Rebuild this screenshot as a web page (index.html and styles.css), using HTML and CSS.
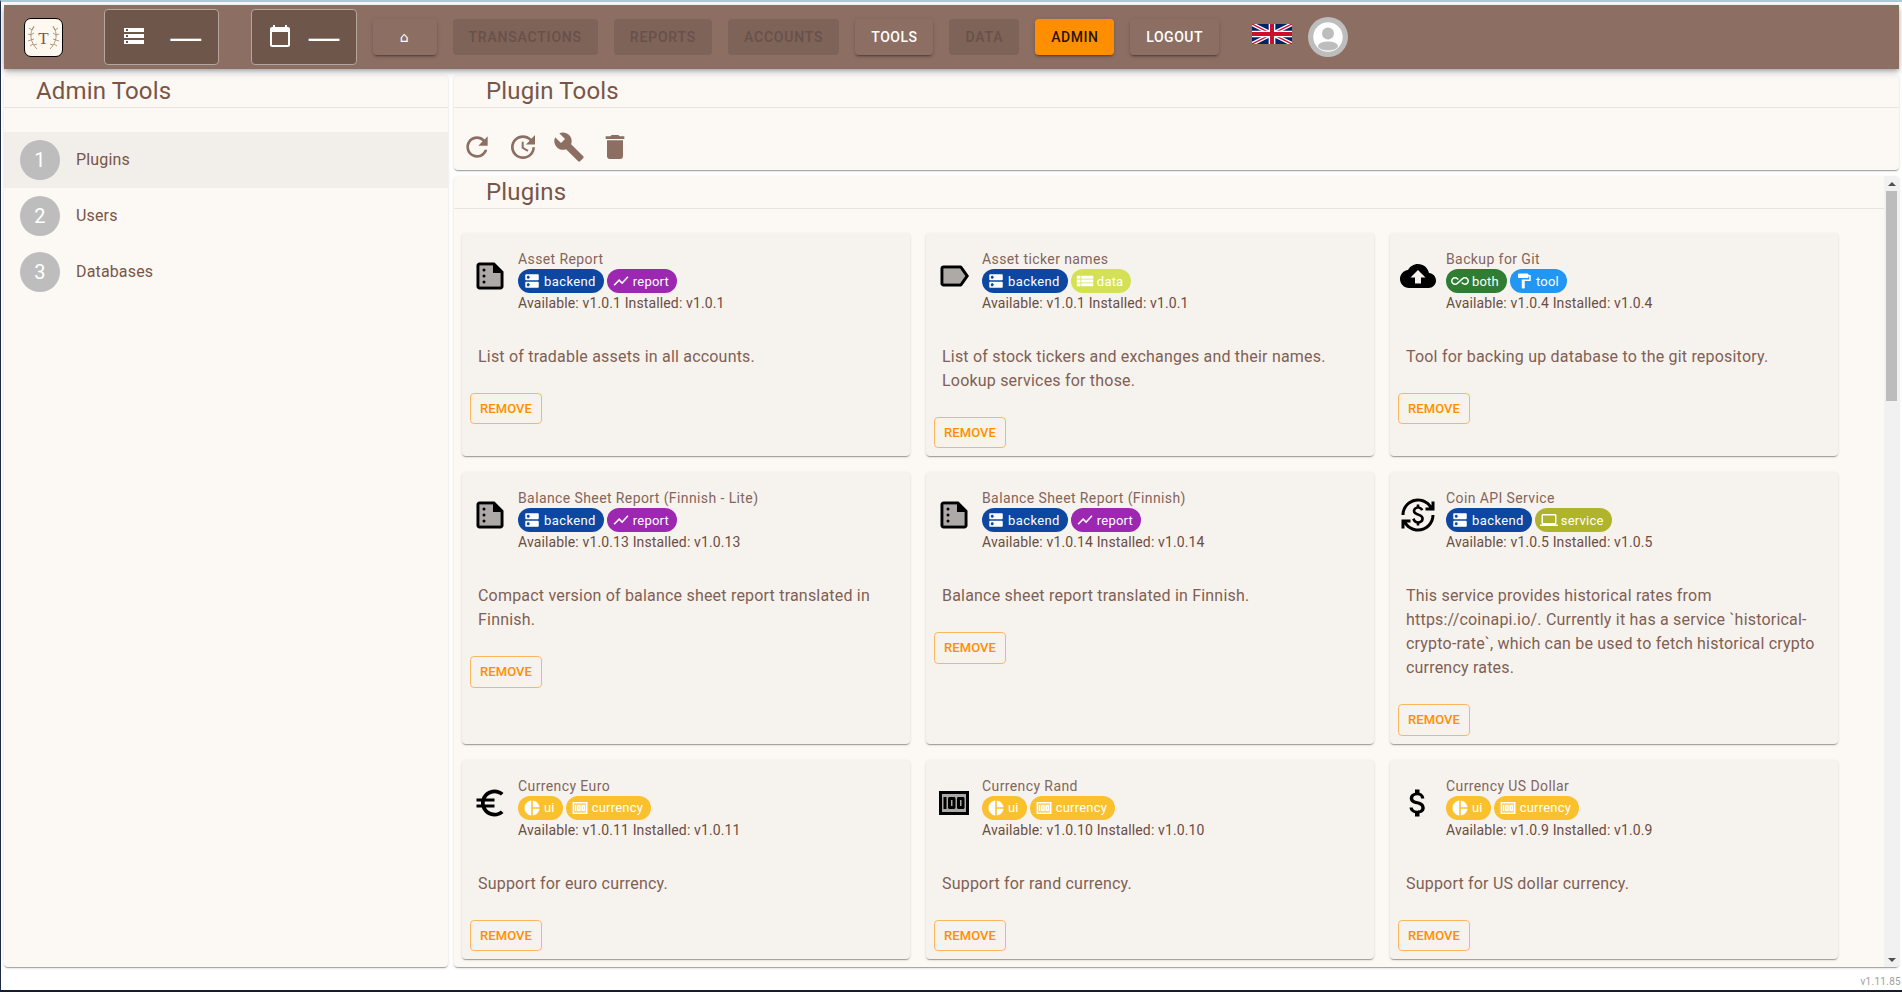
FILE: index.html
```html
<!DOCTYPE html>
<html lang="en">
<head>
<meta charset="UTF-8">
<title>Tasenor Bookkeeper</title>
<link rel="stylesheet" href="styles.css">
</head>
<body>

<svg class="sprites" width="0" height="0">
  <symbol id="i-storage" viewBox="0 0 24 24"><path d="M2 20h20v-4H2v4zm2-3h2v2H4v-2zM2 4v4h20V4H2zm4 3H4V5h2v2zm-4 7h20v-4H2v4zm2-3h2v2H4v-2z"/></symbol>
  <symbol id="i-dns" viewBox="0 0 24 24"><path d="M20 13H4c-.55 0-1 .45-1 1v6c0 .55.45 1 1 1h16c.55 0 1-.45 1-1v-6c0-.55-.45-1-1-1zM7 19c-1.1 0-2-.9-2-2s.9-2 2-2 2 .9 2 2-.9 2-2 2zM20 3H4c-.55 0-1 .45-1 1v6c0 .55.45 1 1 1h16c.55 0 1-.45 1-1V4c0-.55-.45-1-1-1zM7 9c-1.1 0-2-.9-2-2s.9-2 2-2 2 .9 2 2-.9 2-2 2z"/></symbol>
  <symbol id="i-calendar" viewBox="0 0 24 24"><path d="M20 3h-1V1h-2v2H7V1H5v2H4c-1.1 0-2 .9-2 2v16c0 1.1.9 2 2 2h16c1.1 0 2-.9 2-2V5c0-1.1-.9-2-2-2zm0 18H4V8h16v13z"/></symbol>
  <symbol id="i-refresh" viewBox="0 0 24 24"><path d="M17.65 6.35C16.2 4.9 14.21 4 12 4c-4.42 0-7.99 3.58-7.99 8s3.57 8 7.99 8c3.73 0 6.84-2.55 7.73-6h-2.08c-.82 2.33-3.04 4-5.65 4-3.31 0-6-2.69-6-6s2.69-6 6-6c1.66 0 3.14.69 4.22 1.78L13 11h7V4l-2.35 2.35z"/></symbol>
  <symbol id="i-update" viewBox="0 0 24 24"><path d="M21 10.12h-6.78l2.74-2.82c-2.73-2.7-7.15-2.8-9.88-.1-2.73 2.71-2.73 7.08 0 9.79s7.15 2.71 9.88 0C18.32 15.65 19 14.08 19 12.1h2c0 1.98-.88 4.55-2.64 6.29-3.51 3.48-9.21 3.48-12.72 0-3.5-3.47-3.53-9.11-.02-12.58s9.14-3.47 12.65 0L21 3v7.12zM12.5 8v4.25l3.5 2.08-.72 1.21L11 13V8h1.5z"/></symbol>
  <symbol id="i-wrench" viewBox="0 0 24 24"><path d="M22.7 19l-9.1-9.1c.9-2.3.4-5-1.5-6.9-2-2-5-2.4-7.4-1.3L9 6 6 9 1.6 4.7C.4 7.1.9 10.1 2.9 12.1c1.9 1.9 4.6 2.4 6.9 1.5l9.1 9.1c.4.4 1 .4 1.4 0l2.3-2.3c.5-.4.5-1.1.1-1.4z"/></symbol>
  <symbol id="i-trash" viewBox="0 0 24 24"><path d="M6 19c0 1.1.9 2 2 2h8c1.1 0 2-.9 2-2V7H6v12zM19 4h-3.5l-1-1h-5l-1 1H5v2h14V4z"/></symbol>
  <symbol id="i-summary" viewBox="0 0 24 24"><path class="duo" d="M5 5v14h14V10h-5V5z"/><path d="M15 3H5c-1.1 0-2 .9-2 2v14c0 1.1.9 2 2 2h14c1.1 0 2-.9 2-2V9l-6-6zM5 19V5h9v5h5v9H5z"/><rect x="7" y="7" width="2" height="2" rx="1"/><rect x="7" y="11" width="2" height="2" rx="1"/><rect x="7" y="15" width="2" height="2" rx="1"/></symbol>
  <symbol id="i-label" viewBox="0 0 24 24"><path class="duo" d="M16 7H5v10h11l3.55-5z"/><path d="M17.63 5.84C17.27 5.33 16.67 5 16 5L5 5.01C3.9 5.01 3 5.9 3 7v10c0 1.1.9 1.99 2 1.99L16 19c.67 0 1.27-.33 1.63-.84L22 12l-4.37-6.16zM16 17H5V7h11l3.55 5L16 17z"/></symbol>
  <symbol id="i-cloud" viewBox="0 0 24 24"><path d="M19.35 10.04C18.67 6.59 15.64 4 12 4 9.11 4 6.6 5.64 5.35 8.04 2.34 8.36 0 10.91 0 14c0 3.31 2.69 6 6 6h13c2.76 0 5-2.24 5-5 0-2.64-2.05-4.78-4.65-4.96zM14 13v4h-4v-4H7l5-5 5 5h-3z"/></symbol>
  <symbol id="i-exchange" viewBox="0 0 24 24"><path d="M12.89 11.1c-1.78-.59-2.64-.96-2.64-1.9 0-1.02 1.11-1.39 1.81-1.39 1.31 0 1.79.99 1.9 1.34l1.58-.67c-.15-.44-.82-1.91-2.66-2.23V5h-1.75v1.26c-2.6.56-2.62 2.85-2.62 2.96 0 2.27 2.25 2.91 3.35 3.31 1.58.56 2.28 1.07 2.28 2.03 0 1.13-1.05 1.61-1.98 1.61-1.82 0-2.34-1.87-2.4-2.09l-1.66.67c.63 2.19 2.28 2.78 3.02 2.96V19h1.75v-1.24c.52-.09 3.02-.59 3.02-3.22.01-1.39-.6-2.61-3-3.44zM3 21H1v-6h6v2H4.52c1.61 2.41 4.36 4 7.48 4 4.97 0 9-4.03 9-9h2c0 6.08-4.92 11-11 11-3.72 0-7.01-1.85-9-4.67V21zm-2-9C1 5.92 5.92 1 12 1c3.72 0 7.01 1.85 9 4.67V3h2v6h-6V7h2.48C17.87 4.59 15.12 3 12 3c-4.97 0-9 4.03-9 9H1z"/></symbol>
  <symbol id="i-euro" viewBox="0 0 24 24"><path d="M15 18.5c-2.51 0-4.68-1.42-5.76-3.5H15v-2H8.58c-.05-.33-.08-.66-.08-1s.03-.67.08-1H15V9H9.24C10.32 6.92 12.5 5.5 15 5.5c1.61 0 3.09.59 4.23 1.57L21 5.3C19.41 3.87 17.3 3 15 3c-3.92 0-7.24 2.51-8.48 6H3v2h3.06c-.04.33-.06.66-.06 1 0 .34.02.67.06 1H3v2h3.52c1.24 3.49 4.56 6 8.48 6 2.31 0 4.41-.87 6-2.3l-1.78-1.77c-1.13.98-2.6 1.57-4.22 1.57z"/></symbol>
  <symbol id="i-money" viewBox="0 0 24 24"><path class="duo" d="M4 6h16v12H4z"/><path d="M5 8h2v8H5zm7 0H9c-.55 0-1 .45-1 1v6c0 .55.45 1 1 1h3c.55 0 1-.45 1-1V9c0-.55-.45-1-1-1zm-1 6h-1v-4h1v4zm7-6h-3c-.55 0-1 .45-1 1v6c0 .55.45 1 1 1h3c.55 0 1-.45 1-1V9c0-.55-.45-1-1-1zm-1 6h-1v-4h1v4z"/><path d="M2 4v16h20V4H2zm2 14V6h16v12H4z"/></symbol>
  <symbol id="i-dollar" viewBox="0 0 24 24"><path d="M11.8 10.9c-2.27-.59-3-1.2-3-2.15 0-1.09 1.01-1.85 2.7-1.85 1.78 0 2.44.85 2.5 2.1h2.21c-.07-1.72-1.12-3.3-3.21-3.81V3h-3v2.16c-1.94.42-3.5 1.68-3.5 3.61 0 2.31 1.91 3.46 4.7 4.13 2.5.6 3 1.48 3 2.41 0 .69-.49 1.79-2.7 1.79-2.06 0-2.87-.92-2.98-2.1h-2.2c.12 2.19 1.76 3.42 3.68 3.83V21h3v-2.15c1.95-.37 3.5-1.5 3.5-3.55 0-2.84-2.43-3.81-4.7-4.4z"/></symbol>
  <symbol id="i-chart" viewBox="0 0 24 24"><path d="M3.5 18.49l6-6.01 4 4L22 6.92l-1.41-1.41-7.09 7.97-4-4L2 16.99z"/></symbol>
  <symbol id="i-list" viewBox="0 0 24 24"><path d="M1 14h5v-4H1v4zm0 5h5v-4H1v4zM1 9h5V5H1v4zm6 5h16v-4H7v4zm0 5h16v-4H7v4zM7 5v4h16V5H7z"/></symbol>
  <symbol id="i-infinity" viewBox="0 0 24 24"><path d="M18.6 6.62c-1.44 0-2.8.56-3.77 1.53L12 10.66 10.48 12h.01L7.8 14.39c-.64.64-1.49.99-2.4.99-1.87 0-3.39-1.51-3.39-3.38S3.53 8.62 5.4 8.62c.91 0 1.76.35 2.44 1.03l1.13 1 1.51-1.34L9.22 8.2C8.2 7.18 6.84 6.62 5.4 6.62 2.42 6.62 0 9.04 0 12s2.42 5.38 5.4 5.38c1.44 0 2.8-.56 3.77-1.53l2.83-2.5.01.01L13.52 12h-.01l2.69-2.39c.64-.64 1.49-.99 2.4-.99 1.87 0 3.39 1.51 3.39 3.38s-1.52 3.38-3.39 3.38c-.9 0-1.76-.35-2.44-1.03l-1.14-1.01-1.51 1.34 1.27 1.12c1.02 1.01 2.37 1.57 3.82 1.57 2.98 0 5.4-2.41 5.4-5.38s-2.42-5.37-5.4-5.37z"/></symbol>
  <symbol id="i-paint" viewBox="0 0 24 24"><path d="M18 4V3c0-.55-.45-1-1-1H5c-.55 0-1 .45-1 1v4c0 .55.45 1 1 1h12c.55 0 1-.45 1-1V6h1v4H9v11c0 .55.45 1 1 1h2c.55 0 1-.45 1-1v-9h8V4h-3z"/></symbol>
  <symbol id="i-laptop" viewBox="0 0 24 24"><path d="M20 18c1.1 0 1.99-.9 1.99-2L22 6c0-1.1-.9-2-2-2H4c-1.1 0-2 .9-2 2v10c0 1.1.9 2 2 2H0v2h24v-2h-4zM4 6h16v10H4V6z"/></symbol>
  <symbol id="i-pie" viewBox="0 0 24 24"><path d="M11 2v20c-5.07-.5-9-4.79-9-10s3.93-9.5 9-10zm2.03 0v8.99H22c-.47-4.74-4.24-8.52-8.97-8.99zm0 11.01V22c4.74-.47 8.5-4.25 8.97-8.99h-8.97z"/></symbol>
</svg>

<header class="topbar">
  <div class="logo">
    <svg width="37" height="37" viewBox="0 0 37 37">
      <g class="laurel">
        <path d="M9 7C4 14 5 23 12 30"/>
        <path d="M28 7c5 7 4 16-3 23"/>
        <path d="M7 11l-3-2M6 16l-3-1M6 21l-3 1M8 25l-3 2M7 11l2-3M6 16l3-2M6 21l3-1M9 26l3-1"/>
        <path d="M30 11l3-2M31 16l3-1M31 21l3 1M29 25l3 2M30 11l-2-3M31 16l-3-2M31 21l-3-1M28 26l-3-1"/>
      </g>
      <text class="logo-t" x="18.5" y="24.5" text-anchor="middle">T</text>
    </svg>
  </div>

  <div class="selector selector-db">
    <svg class="icon-24"><use href="#i-storage"/></svg>
    <span class="selector-value">—</span>
  </div>
  <div class="selector selector-date">
    <svg class="icon-24"><use href="#i-calendar"/></svg>
    <span class="selector-value">—</span>
  </div>

  <nav class="menu">
    <button class="btn btn-home">⌂</button>
    <button class="btn btn-off">Transactions</button>
    <button class="btn btn-off">Reports</button>
    <button class="btn btn-off">Accounts</button>
    <button class="btn">Tools</button>
    <button class="btn btn-off">Data</button>
    <button class="btn btn-active">Admin</button>
    <button class="btn">Logout</button>
  </nav>

  <svg class="flag" width="40" height="20" viewBox="0 0 60 30">
    <rect width="60" height="30" fill="#012169"/>
    <path d="M0 0l60 30M60 0L0 30" stroke="#fff" stroke-width="6"/>
    <path d="M0 0l60 30M60 0L0 30" stroke="#c8102e" stroke-width="2"/>
    <path d="M30 0v30M0 15h60" stroke="#fff" stroke-width="10"/>
    <path d="M30 0v30M0 15h60" stroke="#c8102e" stroke-width="6"/>
  </svg>

  <svg class="avatar" width="40" height="40" viewBox="0 0 40 40">
    <circle cx="20" cy="20" r="20" fill="#bdbdbd"/>
    <circle cx="20" cy="20" r="14.7" fill="#fff"/>
    <circle cx="20" cy="16.5" r="6" fill="#bdbdbd"/>
    <ellipse cx="20" cy="29" rx="10" ry="4.5" fill="#bdbdbd"/>
  </svg>
</header>

<main class="layout">
  <aside class="panel side">
    <h1 class="panel-title">Admin Tools</h1>
    <ul class="side-list">
      <li class="side-item selected"><span class="num">1</span>Plugins</li>
      <li class="side-item"><span class="num">2</span>Users</li>
      <li class="side-item"><span class="num">3</span>Databases</li>
    </ul>
  </aside>

  <div class="content">
    <section class="panel tools">
      <h1 class="panel-title">Plugin Tools</h1>
      <div class="toolbar">
        <svg class="tool-icon"><use href="#i-refresh"/></svg>
        <svg class="tool-icon"><use href="#i-update"/></svg>
        <svg class="tool-icon"><use href="#i-wrench"/></svg>
        <svg class="tool-icon"><use href="#i-trash"/></svg>
      </div>
    </section>

    <section class="panel plugins">
      <div class="plugins-inner">
        <h1 class="panel-title">Plugins</h1>
        <div class="plugin-grid">

          <article class="card">
            <div class="card-head">
              <svg class="card-icon"><use href="#i-summary"/></svg>
              <div>
                <div class="card-name">Asset Report</div>
                <div class="chips">
                  <span class="chip c-backend"><svg><use href="#i-dns"/></svg>backend</span>
                  <span class="chip c-report"><svg><use href="#i-chart"/></svg>report</span>
                </div>
                <div class="card-version">Available: v1.0.1 Installed: v1.0.1</div>
              </div>
            </div>
            <p class="card-text">List of tradable assets in all accounts.</p>
            <div class="card-actions"><button class="remove">Remove</button></div>
          </article>

          <article class="card">
            <div class="card-head">
              <svg class="card-icon"><use href="#i-label"/></svg>
              <div>
                <div class="card-name">Asset ticker names</div>
                <div class="chips">
                  <span class="chip c-backend"><svg><use href="#i-dns"/></svg>backend</span>
                  <span class="chip c-data"><svg><use href="#i-list"/></svg>data</span>
                </div>
                <div class="card-version">Available: v1.0.1 Installed: v1.0.1</div>
              </div>
            </div>
            <p class="card-text">List of stock tickers and exchanges and their names. Lookup services for those.</p>
            <div class="card-actions"><button class="remove">Remove</button></div>
          </article>

          <article class="card">
            <div class="card-head">
              <svg class="card-icon"><use href="#i-cloud"/></svg>
              <div>
                <div class="card-name">Backup for Git</div>
                <div class="chips">
                  <span class="chip c-both"><svg><use href="#i-infinity"/></svg>both</span>
                  <span class="chip c-tool"><svg><use href="#i-paint"/></svg>tool</span>
                </div>
                <div class="card-version">Available: v1.0.4 Installed: v1.0.4</div>
              </div>
            </div>
            <p class="card-text">Tool for backing up database to the git repository.</p>
            <div class="card-actions"><button class="remove">Remove</button></div>
          </article>

          <article class="card">
            <div class="card-head">
              <svg class="card-icon"><use href="#i-summary"/></svg>
              <div>
                <div class="card-name">Balance Sheet Report (Finnish - Lite)</div>
                <div class="chips">
                  <span class="chip c-backend"><svg><use href="#i-dns"/></svg>backend</span>
                  <span class="chip c-report"><svg><use href="#i-chart"/></svg>report</span>
                </div>
                <div class="card-version">Available: v1.0.13 Installed: v1.0.13</div>
              </div>
            </div>
            <p class="card-text">Compact version of balance sheet report translated in Finnish.</p>
            <div class="card-actions"><button class="remove">Remove</button></div>
          </article>

          <article class="card">
            <div class="card-head">
              <svg class="card-icon"><use href="#i-summary"/></svg>
              <div>
                <div class="card-name">Balance Sheet Report (Finnish)</div>
                <div class="chips">
                  <span class="chip c-backend"><svg><use href="#i-dns"/></svg>backend</span>
                  <span class="chip c-report"><svg><use href="#i-chart"/></svg>report</span>
                </div>
                <div class="card-version">Available: v1.0.14 Installed: v1.0.14</div>
              </div>
            </div>
            <p class="card-text">Balance sheet report translated in Finnish.</p>
            <div class="card-actions"><button class="remove">Remove</button></div>
          </article>

          <article class="card">
            <div class="card-head">
              <svg class="card-icon"><use href="#i-exchange"/></svg>
              <div>
                <div class="card-name">Coin API Service</div>
                <div class="chips">
                  <span class="chip c-backend"><svg><use href="#i-dns"/></svg>backend</span>
                  <span class="chip c-service"><svg><use href="#i-laptop"/></svg>service</span>
                </div>
                <div class="card-version">Available: v1.0.5 Installed: v1.0.5</div>
              </div>
            </div>
            <p class="card-text">This service provides historical rates from https://coinapi.io/. Currently it has a service `historical-crypto-rate`, which can be used to fetch historical crypto currency rates.</p>
            <div class="card-actions"><button class="remove">Remove</button></div>
          </article>

          <article class="card">
            <div class="card-head">
              <svg class="card-icon"><use href="#i-euro"/></svg>
              <div>
                <div class="card-name">Currency Euro</div>
                <div class="chips">
                  <span class="chip c-ui"><svg><use href="#i-pie"/></svg>ui</span>
                  <span class="chip c-ui"><svg><use href="#i-money"/></svg>currency</span>
                </div>
                <div class="card-version">Available: v1.0.11 Installed: v1.0.11</div>
              </div>
            </div>
            <p class="card-text">Support for euro currency.</p>
            <div class="card-actions"><button class="remove">Remove</button></div>
          </article>

          <article class="card">
            <div class="card-head">
              <svg class="card-icon"><use href="#i-money"/></svg>
              <div>
                <div class="card-name">Currency Rand</div>
                <div class="chips">
                  <span class="chip c-ui"><svg><use href="#i-pie"/></svg>ui</span>
                  <span class="chip c-ui"><svg><use href="#i-money"/></svg>currency</span>
                </div>
                <div class="card-version">Available: v1.0.10 Installed: v1.0.10</div>
              </div>
            </div>
            <p class="card-text">Support for rand currency.</p>
            <div class="card-actions"><button class="remove">Remove</button></div>
          </article>

          <article class="card">
            <div class="card-head">
              <svg class="card-icon"><use href="#i-dollar"/></svg>
              <div>
                <div class="card-name">Currency US Dollar</div>
                <div class="chips">
                  <span class="chip c-ui"><svg><use href="#i-pie"/></svg>ui</span>
                  <span class="chip c-ui"><svg><use href="#i-money"/></svg>currency</span>
                </div>
                <div class="card-version">Available: v1.0.9 Installed: v1.0.9</div>
              </div>
            </div>
            <p class="card-text">Support for US dollar currency.</p>
            <div class="card-actions"><button class="remove">Remove</button></div>
          </article>

        </div>
      </div>

      <div class="scrollbar">
        <span class="arrow arrow-up"></span>
        <span class="thumb"></span>
        <span class="arrow arrow-down"></span>
      </div>
    </section>
  </div>
</main>

<footer class="version">v1.11.85</footer>

</body>
</html>
```

FILE: styles.css
```css
:root {
  --brown: #8d6e63;
  --panel-bg: #fcf9f4;
  --card-bg: #f6f3ee;
  --line: #e7e3de;
  --title: #795548;
  --orange: #ff8f00;
}

* {
  box-sizing: border-box;
}

body {
  margin: 0;
  width: 1902px;
  height: 992px;
  overflow: hidden;
  display: flex;
  flex-direction: column;
  padding: 3px 3px 0 3px;
  background: #fff;
  border-top: 2px solid #a4ccd8;
  border-bottom: 2px solid #171d2b;
  border-left: 1px solid #1d2b46;
  font-family: Roboto, "Noto Sans", sans-serif;
  color: var(--title);
}

.sprites {
  position: absolute;
}

/* top bar */
.topbar {
  height: 64px;
  flex: none;
  display: flex;
  align-items: center;
  padding-left: 20px;
  background: var(--brown);
  box-shadow: 0 2px 4px -1px rgba(0,0,0,.2), 0 4px 5px 0 rgba(0,0,0,.14), 0 1px 10px 0 rgba(0,0,0,.12);
  position: relative;
}

.logo {
  width: 39px;
  height: 39px;
  margin-right: 41px;
  border: 1px solid #000;
  border-radius: 7px;
  background: #fdf9f1;
}

.logo svg {
  display: block;
}

.laurel path {
  fill: none;
  stroke: #a08268;
  stroke-width: .8;
}

.logo-t {
  font-family: "Liberation Serif", serif;
  font-size: 17px;
  fill: #7d5a44;
}

.selector {
  height: 56px;
  display: flex;
  align-items: center;
  padding: 0 16px;
  margin-right: 32px;
  background: #6f564a;
  border: 1px solid #b4a59e;
  border-radius: 4px;
  color: #fff;
}

.selector-db {
  gap: 24px;
  padding: 0 17px;
}

.selector-date {
  gap: 16px;
  margin-right: 16px;
}

.icon-24 {
  width: 24px;
  height: 24px;
  fill: #fff;
  margin-top: -2px;
}

.selector-value {
  font-size: 47px;
  line-height: 40px;
  font-weight: 300;
  margin: 8px -2.5px 0;
}

.menu {
  display: flex;
  gap: 16px;
}

.btn {
  height: 36px;
  min-width: 64px;
  padding: 0 16px;
  border: 0;
  border-radius: 4px;
  background: var(--brown);
  color: #fff;
  font: 500 14px Roboto, sans-serif;
  letter-spacing: .5px;
  text-transform: uppercase;
  box-shadow: 0 3px 1px -2px rgba(0,0,0,.2), 0 2px 2px 0 rgba(0,0,0,.14), 0 1px 5px 0 rgba(0,0,0,.12);
}

.btn-off {
  background: #7e6358;
  color: #68514a;
  letter-spacing: .8px;
  box-shadow: none;
}

.btn-active {
  background: var(--orange);
  color: rgba(0,0,0,.87);
}

.btn-home {
  font-family: "DejaVu Sans", sans-serif;
}

.flag {
  margin: 0 16px 6px 33.5px;
}

/* panels */
.layout {
  flex: 1;
  min-height: 0;
  display: grid;
  grid-template-columns: 444px 1445px;
  gap: 6px;
  margin-top: 6px;
}

.panel {
  background: var(--panel-bg);
  border-radius: 4px;
  box-shadow: 0 2px 1px -1px rgba(0,0,0,.2), 0 1px 1px 0 rgba(0,0,0,.14), 0 1px 3px 0 rgba(0,0,0,.12);
}

.panel-title {
  margin: 0;
  height: 33px;
  padding-left: 32px;
  border-bottom: 1px solid var(--line);
  font-size: 24px;
  font-weight: 400;
  line-height: 32px;
  letter-spacing: .15px;
  color: var(--title);
}

.side-list {
  list-style: none;
  margin: 0;
  padding: 24px 0 0;
}

.side-item {
  height: 56px;
  display: flex;
  align-items: center;
  gap: 16px;
  padding-left: 16px;
  padding-bottom: 1px;
  font-size: 16px;
  letter-spacing: .15px;
}

.side-item.selected {
  background: #f2eeea;
}

.num {
  width: 40px;
  height: 40px;
  border-radius: 50%;
  display: flex;
  align-items: center;
  justify-content: center;
  background: #bdbdbd;
  color: #fff;
  font-size: 20px;
}

.content {
  display: flex;
  flex-direction: column;
  gap: 6px;
  min-height: 0;
}

.tools {
  height: 95px;
  flex: none;
}

.toolbar {
  display: flex;
  padding: 16px 0 0;
}

.tool-icon {
  width: 32px;
  height: 32px;
  margin: 7px;
  fill: var(--brown);
}

.plugins {
  flex: 1;
  min-height: 0;
  display: flex;
  overflow: hidden;
}

.plugins-inner {
  flex: 1;
  min-width: 0;
}

.plugin-grid {
  display: grid;
  grid-template-columns: repeat(3, 448px);
  gap: 16px;
  padding: 24px 0 0 8px;
}

/* plugin cards */
.card {
  background: var(--card-bg);
  border-radius: 4px;
  box-shadow: 0 2px 1px -1px rgba(0,0,0,.2), 0 1px 1px 0 rgba(0,0,0,.14), 0 1px 3px 0 rgba(0,0,0,.12);
}

.card-head {
  display: flex;
  gap: 16px;
  padding: 16px;
}

.card-icon {
  flex: none;
  width: 36px;
  height: 36px;
  margin: 9px -6px 0;
  fill: #000;
}

.duo {
  opacity: .3;
}

.card-name {
  font-size: 14px;
  line-height: 20px;
  letter-spacing: .4px;
  color: #84655a;
}

.chips {
  display: flex;
  gap: 3px;
}

.chip {
  height: 24px;
  display: inline-flex;
  align-items: center;
  padding-right: 8px;
  border-radius: 12px;
  color: #fff;
  font-size: 13px;
  letter-spacing: .2px;
}

.chip svg {
  width: 18px;
  height: 18px;
  margin: 0 3px 0 5px;
  fill: #fff;
}

.c-backend { background: #0d47a1; letter-spacing: .4px; }
.c-report { background: #9c27b0; }
.c-data { background: #d4e157; }
.c-both { background: #2e7d32; }
.c-tool { background: #2196f3; }
.c-service { background: #afb42b; }
.c-ui { background: #fbc02d; }

.card-version {
  font-size: 14px;
  line-height: 20px;
  letter-spacing: .13px;
  color: #6d4c41;
}

.card-text {
  margin: 0;
  padding: 16px;
  font-size: 16px;
  line-height: 24px;
  letter-spacing: .2px;
  color: #7f6054;
}

.card-actions {
  padding: 8px;
}

.remove {
  display: block;
  padding: 3px 9px;
  border: 1px solid rgba(255,143,0,.6);
  border-radius: 4px;
  background: transparent;
  color: var(--orange);
  font: 500 13px/23.25px Roboto, sans-serif;
  letter-spacing: .1px;
  text-transform: uppercase;
}

/* scrollbar of the plugin list, drawn at its start position */
.scrollbar {
  flex: none;
  width: 15px;
  display: flex;
  flex-direction: column;
  align-items: center;
  background: #f1f1f1;
}

.arrow {
  flex: none;
  width: 15px;
  height: 15px;
  display: flex;
  align-items: center;
  justify-content: center;
}

.arrow::after {
  content: "";
  border-left: 4px solid transparent;
  border-right: 4px solid transparent;
}

.arrow-up::after {
  border-bottom: 4px solid #505050;
}

.arrow-down {
  margin-top: auto;
}

.arrow-down::after {
  border-top: 4px solid #505050;
}

.thumb {
  width: 11px;
  height: 210px;
  background: #bcbcbc;
}

.version {
  flex: none;
  height: 23px;
  margin-right: -2px;
  line-height: 30px;
  text-align: right;
  font-size: 10px;
  letter-spacing: .3px;
  color: #9e9e9e;
}
```
